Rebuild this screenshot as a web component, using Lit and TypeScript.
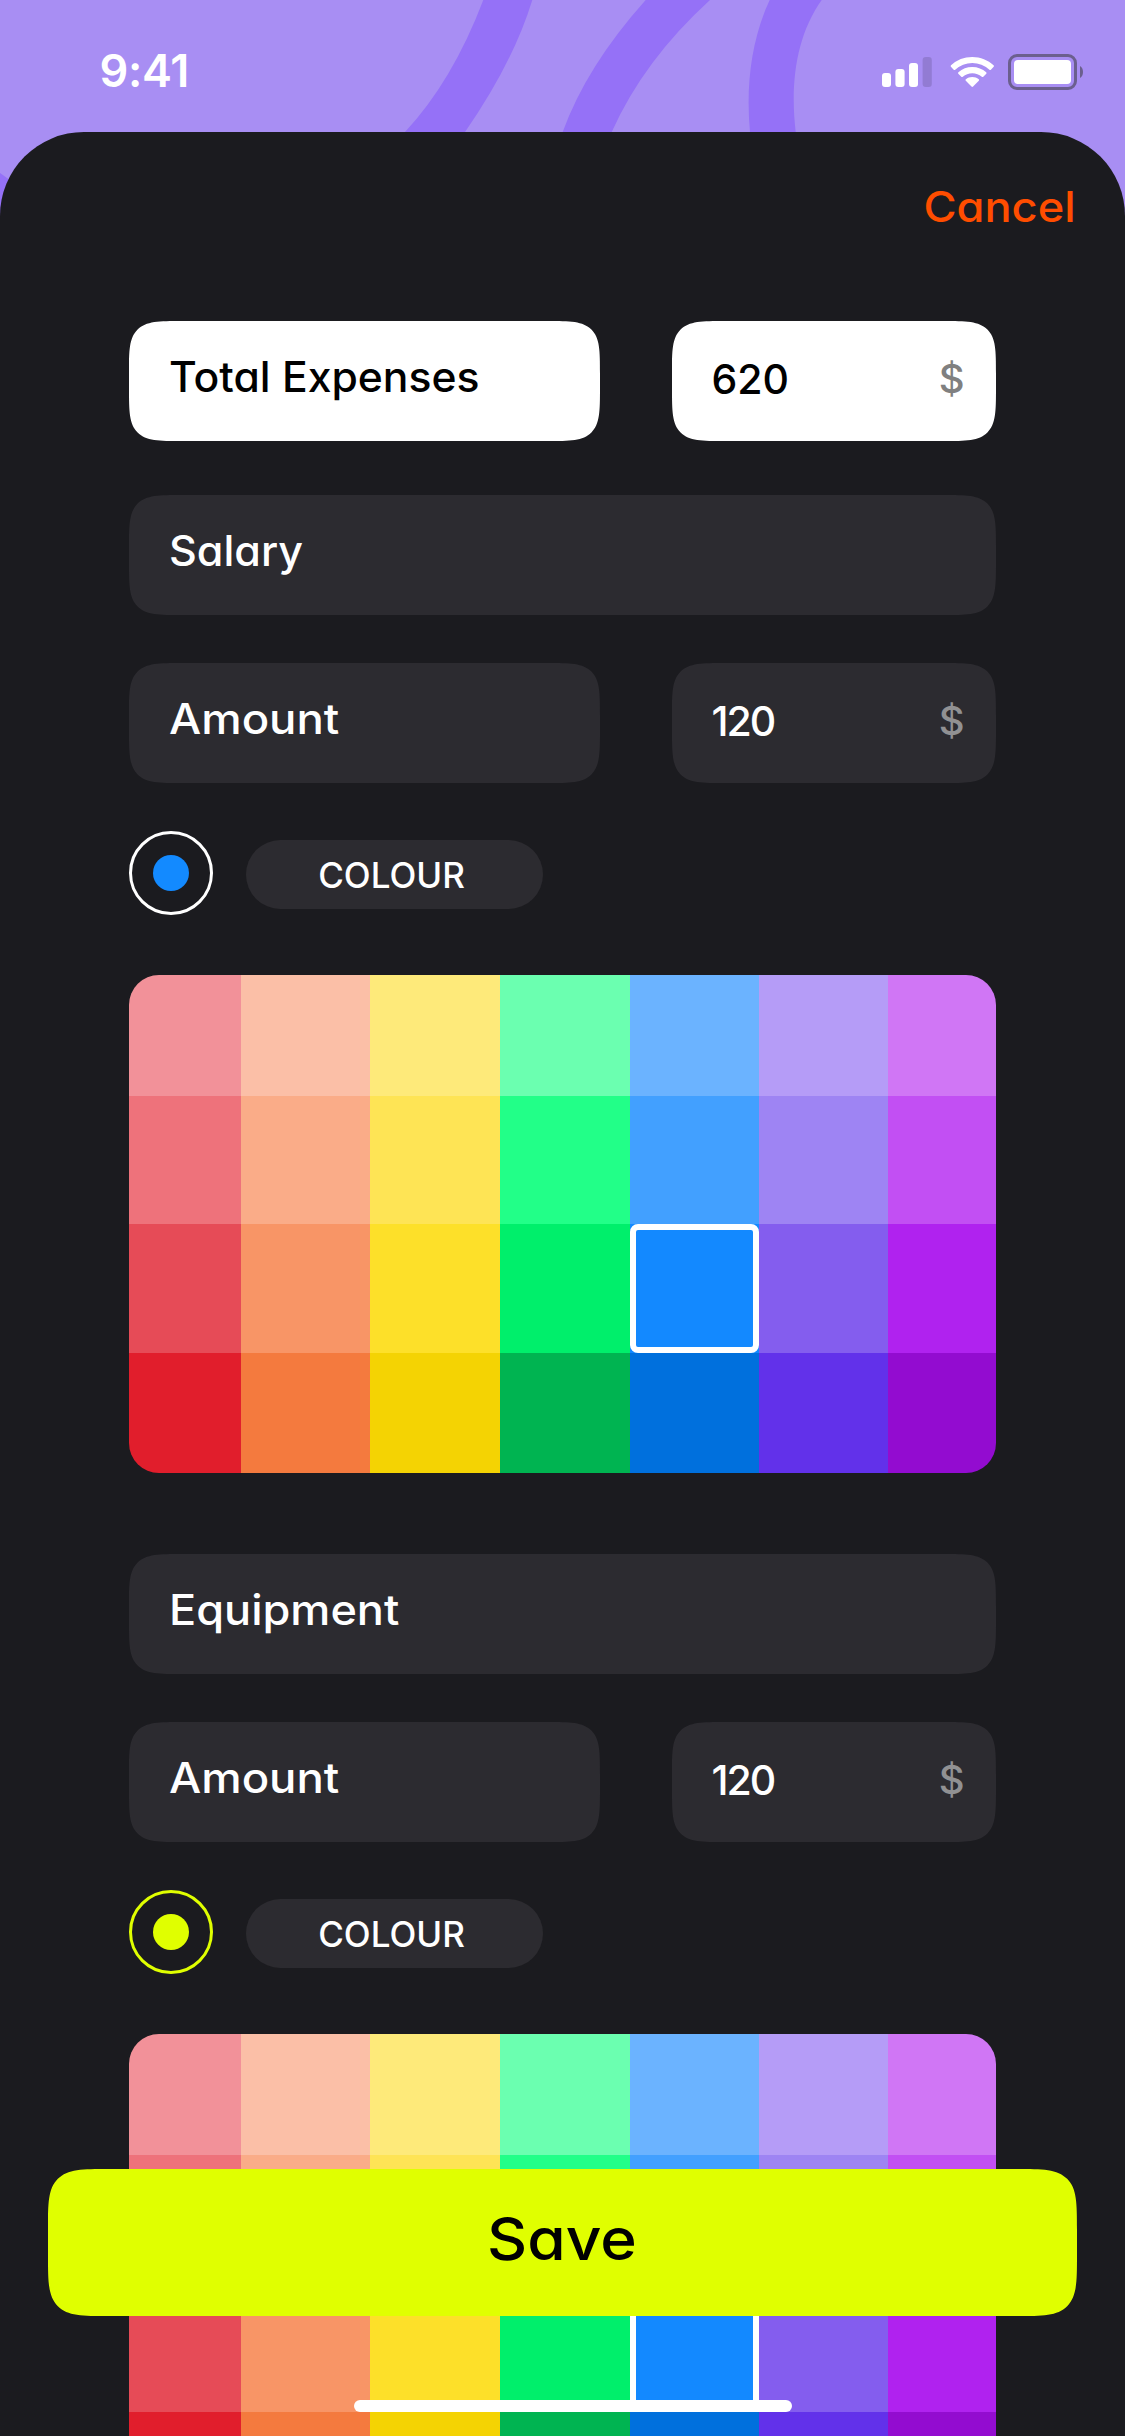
import { LitElement, html, css, nothing } from "lit";
import { customElement, property } from "lit/decorators.js";
import { styleMap } from "lit/directives/style-map.js";

const PALETTE: string[][] = [
  ["#f29199", "#fbbfa7", "#feea7a", "#6bffb0", "#6bb3ff", "#b59cf7", "#d076f5"],
  ["#ee727b", "#faac88", "#fee455", "#22ff88", "#42a0ff", "#9e84f3", "#c24ff3"],
  ["#e64b57", "#f89566", "#fde029", "#00ef6b", "#1389ff", "#845dee", "#b022ef"],
  ["#e11e2c", "#f47a3e", "#f4d303", "#00b451", "#0070dd", "#6231ea", "#930cd0"],
];

interface Expense {
  name: string;
  amount: number;
  ring: string;
  dot: string;
  stretch: number;
}

const EXPENSES: Expense[] = [
  { name: "Salary", amount: 120, ring: "#ffffff", dot: "#138aff", stretch: 1.025 },
  { name: "Equipment", amount: 120, ring: "#e0ff00", dot: "#e0ff00", stretch: 1.073 },
];

/** Rounded input box: a label, or a value followed by its currency sign. */
@customElement("form-field")
class FormField extends LitElement {
  @property() text = "";
  @property() unit = "";
  @property({ type: Number }) tracking = 0;
  @property({ type: Number }) stretch = 1;

  static styles = css`
    :host {
      display: flex;
      justify-content: space-between;
      box-sizing: border-box;
      height: 120px;
      padding: 0 31.5px 0 39.5px;
      border-radius: 54px;
      corner-shape: squircle;
      background: #2c2b30;
      color: #fff;
      font-size: 42px;
      font-weight: 500;
      line-height: 111px;
      white-space: nowrap;
    }
    :host([light]) {
      background: #fff;
      color: #000;
    }
    :host([unit]) {
      font-size: 41px;
      line-height: 116px;
    }
    .text {
      transform-origin: left;
    }
    .unit {
      color: #919193;
      font-size: 40px;
    }
    :host([light]) .unit {
      color: #808080;
    }
  `;

  render() {
    const shape = {
      letterSpacing: `${this.tracking}px`,
      transform: `scaleX(${this.stretch})`,
    };
    return html`
      <span class="text" style=${styleMap(shape)}>${this.text}</span>
      ${this.unit ? html`<span class="unit">${this.unit}</span>` : nothing}
    `;
  }
}

/** Swatch grid with one highlighted cell. */
@customElement("colour-palette")
class ColourPalette extends LitElement {
  @property() selected = "#1389ff";

  static styles = css`
    :host {
      display: grid;
      grid-template-columns: 112px 129px 130px 129.5px 129.5px 129px 108px;
      grid-template-rows: 121px 128px 129px 120px;
      width: 867px;
      border-radius: 30px;
      overflow: hidden;
    }
    .cell {
      display: grid;
    }
    .frame {
      border: 6px solid #fff;
      border-radius: 8px;
    }
  `;

  render() {
    return PALETTE.flat().map(
      (colour) => html`
        <div class="cell" style=${styleMap({ background: colour })}>
          ${colour === this.selected ? html`<div class="frame"></div>` : nothing}
        </div>
      `
    );
  }
}

@customElement("status-bar")
class StatusBar extends LitElement {
  static styles = css`
    :host {
      display: flex;
      justify-content: space-between;
      height: 132px;
      padding-left: 99.5px;
      color: #fff;
    }
    .time {
      font-size: 45px;
      font-weight: 600;
      line-height: 141px;
      letter-spacing: -0.3px;
    }
    .icons {
      width: 265px;
      height: 90px;
      margin-top: 30px;
    }
  `;

  render() {
    return html`
      <span class="time">9:41</span>
      <svg class="icons" viewBox="860 30 265 90">
        <g fill="#fff">
          <rect x="882" y="73" width="9" height="14" rx="3" />
          <rect x="895.4" y="69" width="9.2" height="18" rx="3" />
          <rect x="909" y="63" width="9" height="24" rx="3" />
          <rect x="922.6" y="57" width="9.2" height="30" rx="3" fill="#000" fill-opacity=".13" />
          <path d="M972.3 57c8.2 0 15.7 3.100 21.300 8.300.5.5.5 1 .1 1.500l-2.800 2.900c-.4.400-1 .4-1.500 0a25 25 0 0 0-34.200 0c-.5.4-1.100.4-1.500 0l-2.800-2.900c-.4-.5-.4-1 .1-1.500A31.200 31.200 0 0 1 972.300 57z" />
          <path d="M972.3 66.900c5.400 0 10.200 2 13.900 5.300.5.500.5 1 .1 1.500l-3 3.100c-.4.400-1 .4-1.500 0a14.200 14.200 0 0 0-19 0c-.5.4-1.100.4-1.500 0l-3-3.100c-.4-.5-.4-1 .1-1.500a20.700 20.700 0 0 1 13.900-5.300z" />
          <path d="M972.3 77c2.500 0 4.700.9 6.400 2.200.5.400.5 1 .1 1.500l-5.700 5.900c-.5.500-1.100.5-1.600 0l-5.700-5.900c-.4-.5-.4-1.100.1-1.500 1.700-1.300 3.900-2.200 6.400-2.200z" />
          <rect x="1014" y="60" width="57" height="24" rx="4" />
        </g>
        <rect x="1009.500" y="55.500" width="66" height="33" rx="7.500" fill="none" stroke="#6b5f8e" stroke-width="3" />
        <path d="M1080 66c1.800.9 3 3.300 3 6s-1.200 5.100-3 6z" fill="#6b5f8e" />
      </svg>
    `;
  }
}

@customElement("app-root")
class AppRoot extends LitElement {
  static styles = css`
    :host {
      display: block;
      position: relative;
      width: 1125px;
      height: 2436px;
      overflow: hidden;
      background: #a88ef3;
      font-family: Inter, "Liberation Sans", sans-serif;
      font-feature-settings: "cv11";
    }
    .backdrop {
      position: absolute;
      top: 0;
      left: 0;
      width: 1125px;
      height: 240px;
    }
    .content {
      position: relative;
    }
    .sheet {
      box-sizing: border-box;
      height: 2304px;
      border-radius: 84px 84px 0 0;
      background: #1b1b1f;
      overflow: hidden;
    }
    .header {
      display: flex;
      justify-content: flex-end;
      height: 189px;
      box-sizing: border-box;
      padding: 45px 49.5px 0 0;
    }
    .cancel {
      color: #ff4d00;
      font-size: 42px;
      font-weight: 500;
      line-height: 60px;
      transform: scaleX(1.075);
      transform-origin: right;
    }
    .form {
      display: flex;
      flex-direction: column;
      width: 867px;
      margin-left: 129px;
    }
    .row {
      display: grid;
      grid-template-columns: 471px 324px;
      column-gap: 72px;
    }
    .expense {
      display: flex;
      flex-direction: column;
      gap: 48px;
      margin-bottom: 81px;
    }
    .total {
      margin-bottom: 54px;
    }
    .colour-row {
      display: flex;
      align-items: center;
      gap: 33px;
      margin-bottom: 12px;
    }
    .ring {
      display: grid;
      place-items: center;
      box-sizing: border-box;
      width: 84px;
      height: 84px;
      border: 3px solid;
      border-radius: 50%;
    }
    .dot {
      width: 36px;
      height: 36px;
      border-radius: 50%;
    }
    .pill {
      box-sizing: border-box;
      width: 297px;
      height: 69px;
      margin-top: 3px;
      padding-right: 6px;
      border-radius: 35px;
      background: #2c2b30;
      color: #fff;
      font-size: 35px;
      font-weight: 500;
      line-height: 71px;
      text-align: center;
    }
    .save {
      position: absolute;
      left: 48px;
      bottom: 120px;
      width: 1029px;
      height: 147px;
      box-sizing: border-box;
      padding: 0 0 7px;
      border: 0;
      border-radius: 62px;
      corner-shape: squircle;
      background: #e0ff00;
      color: #000;
      font-family: inherit;
      font-feature-settings: inherit;
      font-size: 59px;
      font-weight: 500;
      line-height: 140px;
      text-align: center;
    }
    .save-label {
      display: inline-block;
      transform: scaleX(1.055);
    }
    .home {
      position: absolute;
      left: 354px;
      bottom: 24px;
      width: 438px;
      height: 12px;
      border-radius: 6px;
      background: #fff;
    }
  `;

  private renderExpense(item: Expense) {
    return html`
      <section class="expense">
        <form-field text=${item.name} stretch=${item.stretch}></form-field>
        <div class="row">
          <form-field text="Amount" stretch="1.083"></form-field>
          <form-field text=${item.amount} unit="$" tracking="-2"></form-field>
        </div>
        <div class="colour-row">
          <div class="ring" style=${styleMap({ borderColor: item.ring })}>
            <div class="dot" style=${styleMap({ background: item.dot })}></div>
          </div>
          <div class="pill">COLOUR</div>
        </div>
        <colour-palette></colour-palette>
      </section>
    `;
  }

  render() {
    return html`
      <svg class="backdrop" viewBox="0 0 1125 240" fill="#9571f7">
        <path d="M483.300 0Q452.500 81 405 132H465Q513 63 532.300 0Z" />
        <path d="M645.700 0Q586.600 66 562.700 132H611.700Q644 60 710 0Z" />
        <path d="M769.700 0C752 38 745.500 84 750 132H795.700C790 84 796 36 821.700 0Z" />
        <path d="M0 173L14 183V240H0Z" />
      </svg>
      <div class="content">
        <status-bar></status-bar>
        <main class="sheet">
          <div class="header"><span class="cancel">Cancel</span></div>
          <div class="form">
            <div class="row total">
              <form-field light text="Total Expenses" stretch="1.016"></form-field>
              <form-field light text="620" unit="$"></form-field>
            </div>
            ${EXPENSES.map((item) => this.renderExpense(item))}
          </div>
        </main>
      </div>
      <button class="save"><span class="save-label">Save</span></button>
      <div class="home"></div>
    `;
  }
}
